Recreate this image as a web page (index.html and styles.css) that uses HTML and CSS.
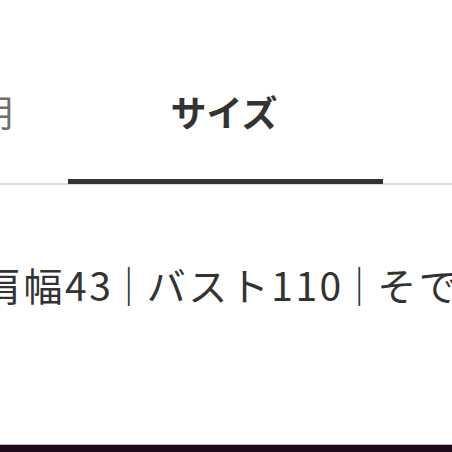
FILE: index.html
```html
<!DOCTYPE html>
<html lang="ja">
<head>
<meta charset="utf-8">
<link rel="stylesheet" href="styles.css">
</head>
<body>
<div class="page">
  <nav class="tabs">
    <div class="tab">アイテム説明</div>
    <div class="tab tab-active">サイズ</div>
    <div class="tab">レビュー</div>
  </nav>
  <div class="content">
    <p class="size-text"><span>肩幅43</span><span class="sep">｜</span><span>バスト110</span><span class="sep">｜</span><span>そで丈60</span><span class="sep">｜</span><span>着丈70</span></p>
  </div>
  <div class="footer-band"></div>
</div>
</body>
</html>
```
FILE: styles.css
```css
html, body {
  margin: 0;
  padding: 0;
  background: #ffffff;
}
.page {
  width: 452px;
  height: 452px;
  overflow: hidden;
  display: flex;
  flex-direction: column;
  font-family: "Noto Sans CJK JP", "Noto Sans", sans-serif;
  color: #333333;
}
.tabs {
  display: flex;
  margin-left: -247px;
  width: 945px;
  border-bottom: 2px solid #dcdcdc;
  flex: none;
}
.tab {
  width: 315px;
  flex: none;
  text-align: center;
  font-size: 36px;
  line-height: 36px;
  padding-top: 93px;
  padding-bottom: 50px;
  color: #6e6e6e;
  border-bottom: 5px solid transparent;
  margin-bottom: -1px;
  white-space: nowrap;
}
.tab:first-child {
  text-indent: -8px;
}
.tab-active {
  font-weight: 700;
  color: #333333;
  border-bottom-color: #333333;
  text-indent: -3px;
}
.content {
  flex: 1;
  overflow: hidden;
}
.size-text {
  margin: 80px 0 0 -18px;
  font-size: 39px;
  line-height: 39px;
  letter-spacing: 2.5px;
  white-space: nowrap;
  color: #333333;
}
.sep {
  margin: 0 -4px;
}
.footer-band {
  flex: none;
  height: 7px;
  background: #1f0a1c;
  border-top: 1px solid #c9b7c4;
}
```
